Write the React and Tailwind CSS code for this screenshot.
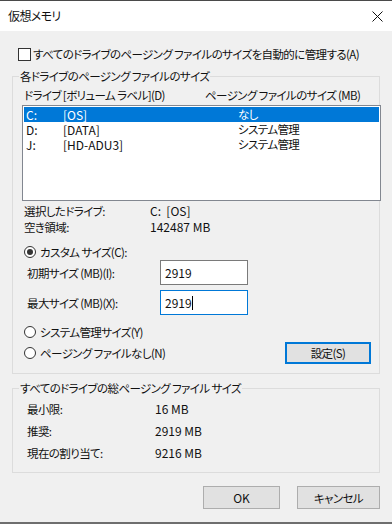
import React from "react";

function Radio({ checked }) {
  return (
    <span className="w-[12px] h-[12px] rounded-full border border-[#333333] bg-white flex items-center justify-center shrink-0">
      {checked && <span className="w-[6px] h-[6px] rounded-full bg-[#333333]" />}
    </span>
  );
}

function L({ children }) {
  return <span className="text-[12px] tracking-[0px]">{children}</span>;
}

export default function App() {
  const rows = [
    { d: "C:", l: "[OS]", s: "なし", sel: true },
    { d: "D:", l: "[DATA]", s: "システム管理" },
    { d: "J:", l: "[HD-ADU3]", s: "システム管理" },
  ];
  return (
    <div className="w-[392px] h-[524px] bg-[#f0f0f0] border-t border-t-[#4a4a4a] border-b-2 border-b-[#6e6e6e] flex flex-col overflow-hidden text-[11.5px] tracking-[-0.6px] leading-[16px] text-[#111111] font-['Noto_Sans_CJK_JP','Noto_Sans',sans-serif] [font-feature-settings:'palt']">
      <div className="h-[30px] bg-white flex items-center justify-between pl-[8px] pr-[9px] shrink-0">
        <span className="text-[12px]">仮想メモリ</span>
        <svg width="11" height="11" viewBox="0 0 11 11" className="shrink-0">
          <path d="M0.5 0.5 L10.5 10.5 M10.5 0.5 L0.5 10.5" stroke="#111" strokeWidth="1" fill="none" />
        </svg>
      </div>
      <div className="flex flex-col flex-1">
        <div className="mt-[15px] h-[16px] flex items-center pl-[18px] gap-[2px]">
          <span className="w-[13px] h-[13px] border border-[#333333] bg-white shrink-0" />
          <span className="whitespace-nowrap">すべてのドライブのページング ファイルのサイズを自動的に管理する(A)</span>
        </div>

        <fieldset className="mt-[6px] ml-[12px] w-[368px] h-[306px] border border-[#dcdcdc] min-w-0">
          <legend className="ml-[6px] px-[1px] leading-[16px]">各ドライブのページング ファイルのサイズ</legend>
          <div className="mt-[3px] h-[16px] flex pl-[11px] whitespace-nowrap">
            <span className="w-[181px]">ドライブ [ボリューム ラベル](D)</span>
            <span>ページング ファイルのサイズ (MB)</span>
          </div>
          <div className="mt-[2px] ml-[9px] w-[359px] h-[96px] border border-[#828790] bg-white p-[1px]">
            {rows.map((r) => (
              <div
                key={r.d}
                className={
                  "h-[15px] leading-[15px] flex pl-[2px] " +
                  (r.sel ? "bg-[#0078d7] text-white" : "")
                }
              >
                <span className="w-[37px]"><L>{r.d}</L></span>
                <span className="w-[175px]"><L>{r.l}</L></span>
                <span>{r.s}</span>
              </div>
            ))}
          </div>
          <div className="mt-[2px] pl-[11px] flex flex-col">
            <div className="h-[16px] flex">
              <span className="w-[126px]">選択したドライブ:</span>
              <L>C:&nbsp; [OS]</L>
            </div>
            <div className="h-[16px] flex">
              <span className="w-[126px]">空き領域:</span>
              <L>142487 MB</L>
            </div>
          </div>
          <div className="mt-[9px] h-[16px] flex items-center pl-[11px] gap-[4px]">
            <Radio checked />
            <span>カスタム サイズ(C):</span>
          </div>
          <div className="h-[25px] flex items-center pl-[14px]">
            <span className="w-[133px]">初期サイズ (MB)(I):</span>
            <div className="w-[88px] h-[25px] border border-[#7a7a7a] bg-white flex items-center px-[4px]">
              <L>2919</L>
            </div>
          </div>
          <div className="mt-[5px] h-[25px] flex items-center pl-[14px]">
            <span className="w-[133px]">最大サイズ (MB)(X):</span>
            <div className="w-[88px] h-[25px] border border-[#0078d7] bg-white flex items-center px-[4px]">
              <L>2919</L>
              <span className="w-[1px] h-[14px] bg-black" />
            </div>
          </div>
          <div className="mt-[9px] h-[16px] flex items-center pl-[11px] gap-[4px]">
            <Radio />
            <span>システム管理サイズ(Y)</span>
          </div>
          <div className="mt-[2px] h-[22px] flex items-center justify-between pl-[11px] pr-[8px]">
            <div className="flex items-center gap-[4px]">
              <Radio />
              <span>ページング ファイルなし(N)</span>
            </div>
            <div className="w-[86px] h-[22px] border-2 border-[#0078d7] bg-[#e1e1e1] flex items-center justify-center">
              設定(S)
            </div>
          </div>
        </fieldset>

        <fieldset className="mt-[6px] ml-[12px] w-[368px] h-[93px] border border-[#dcdcdc] min-w-0">
          <legend className="ml-[6px] px-[1px] leading-[16px]">すべてのドライブの総ページング ファイル サイズ</legend>
          <div className="mt-[2px] pl-[14px] flex flex-col">
            <div className="h-[22px] flex items-center">
              <span className="w-[128px]">最小限:</span>
              <L>16 MB</L>
            </div>
            <div className="h-[22px] flex items-center">
              <span className="w-[128px]">推奨:</span>
              <L>2919 MB</L>
            </div>
            <div className="h-[22px] flex items-center">
              <span className="w-[128px]">現在の割り当て:</span>
              <L>9216 MB</L>
            </div>
          </div>
        </fieldset>

        <div className="mt-[13px] flex justify-end pr-[12px] gap-[17px]">
          <div className="w-[77px] h-[23px] border border-[#adadad] bg-[#e1e1e1] flex items-center justify-center">
            <L>OK</L>
          </div>
          <div className="w-[83px] h-[23px] border border-[#adadad] bg-[#e1e1e1] flex items-center justify-center">
            キャンセル
          </div>
        </div>
      </div>
    </div>
  );
}
